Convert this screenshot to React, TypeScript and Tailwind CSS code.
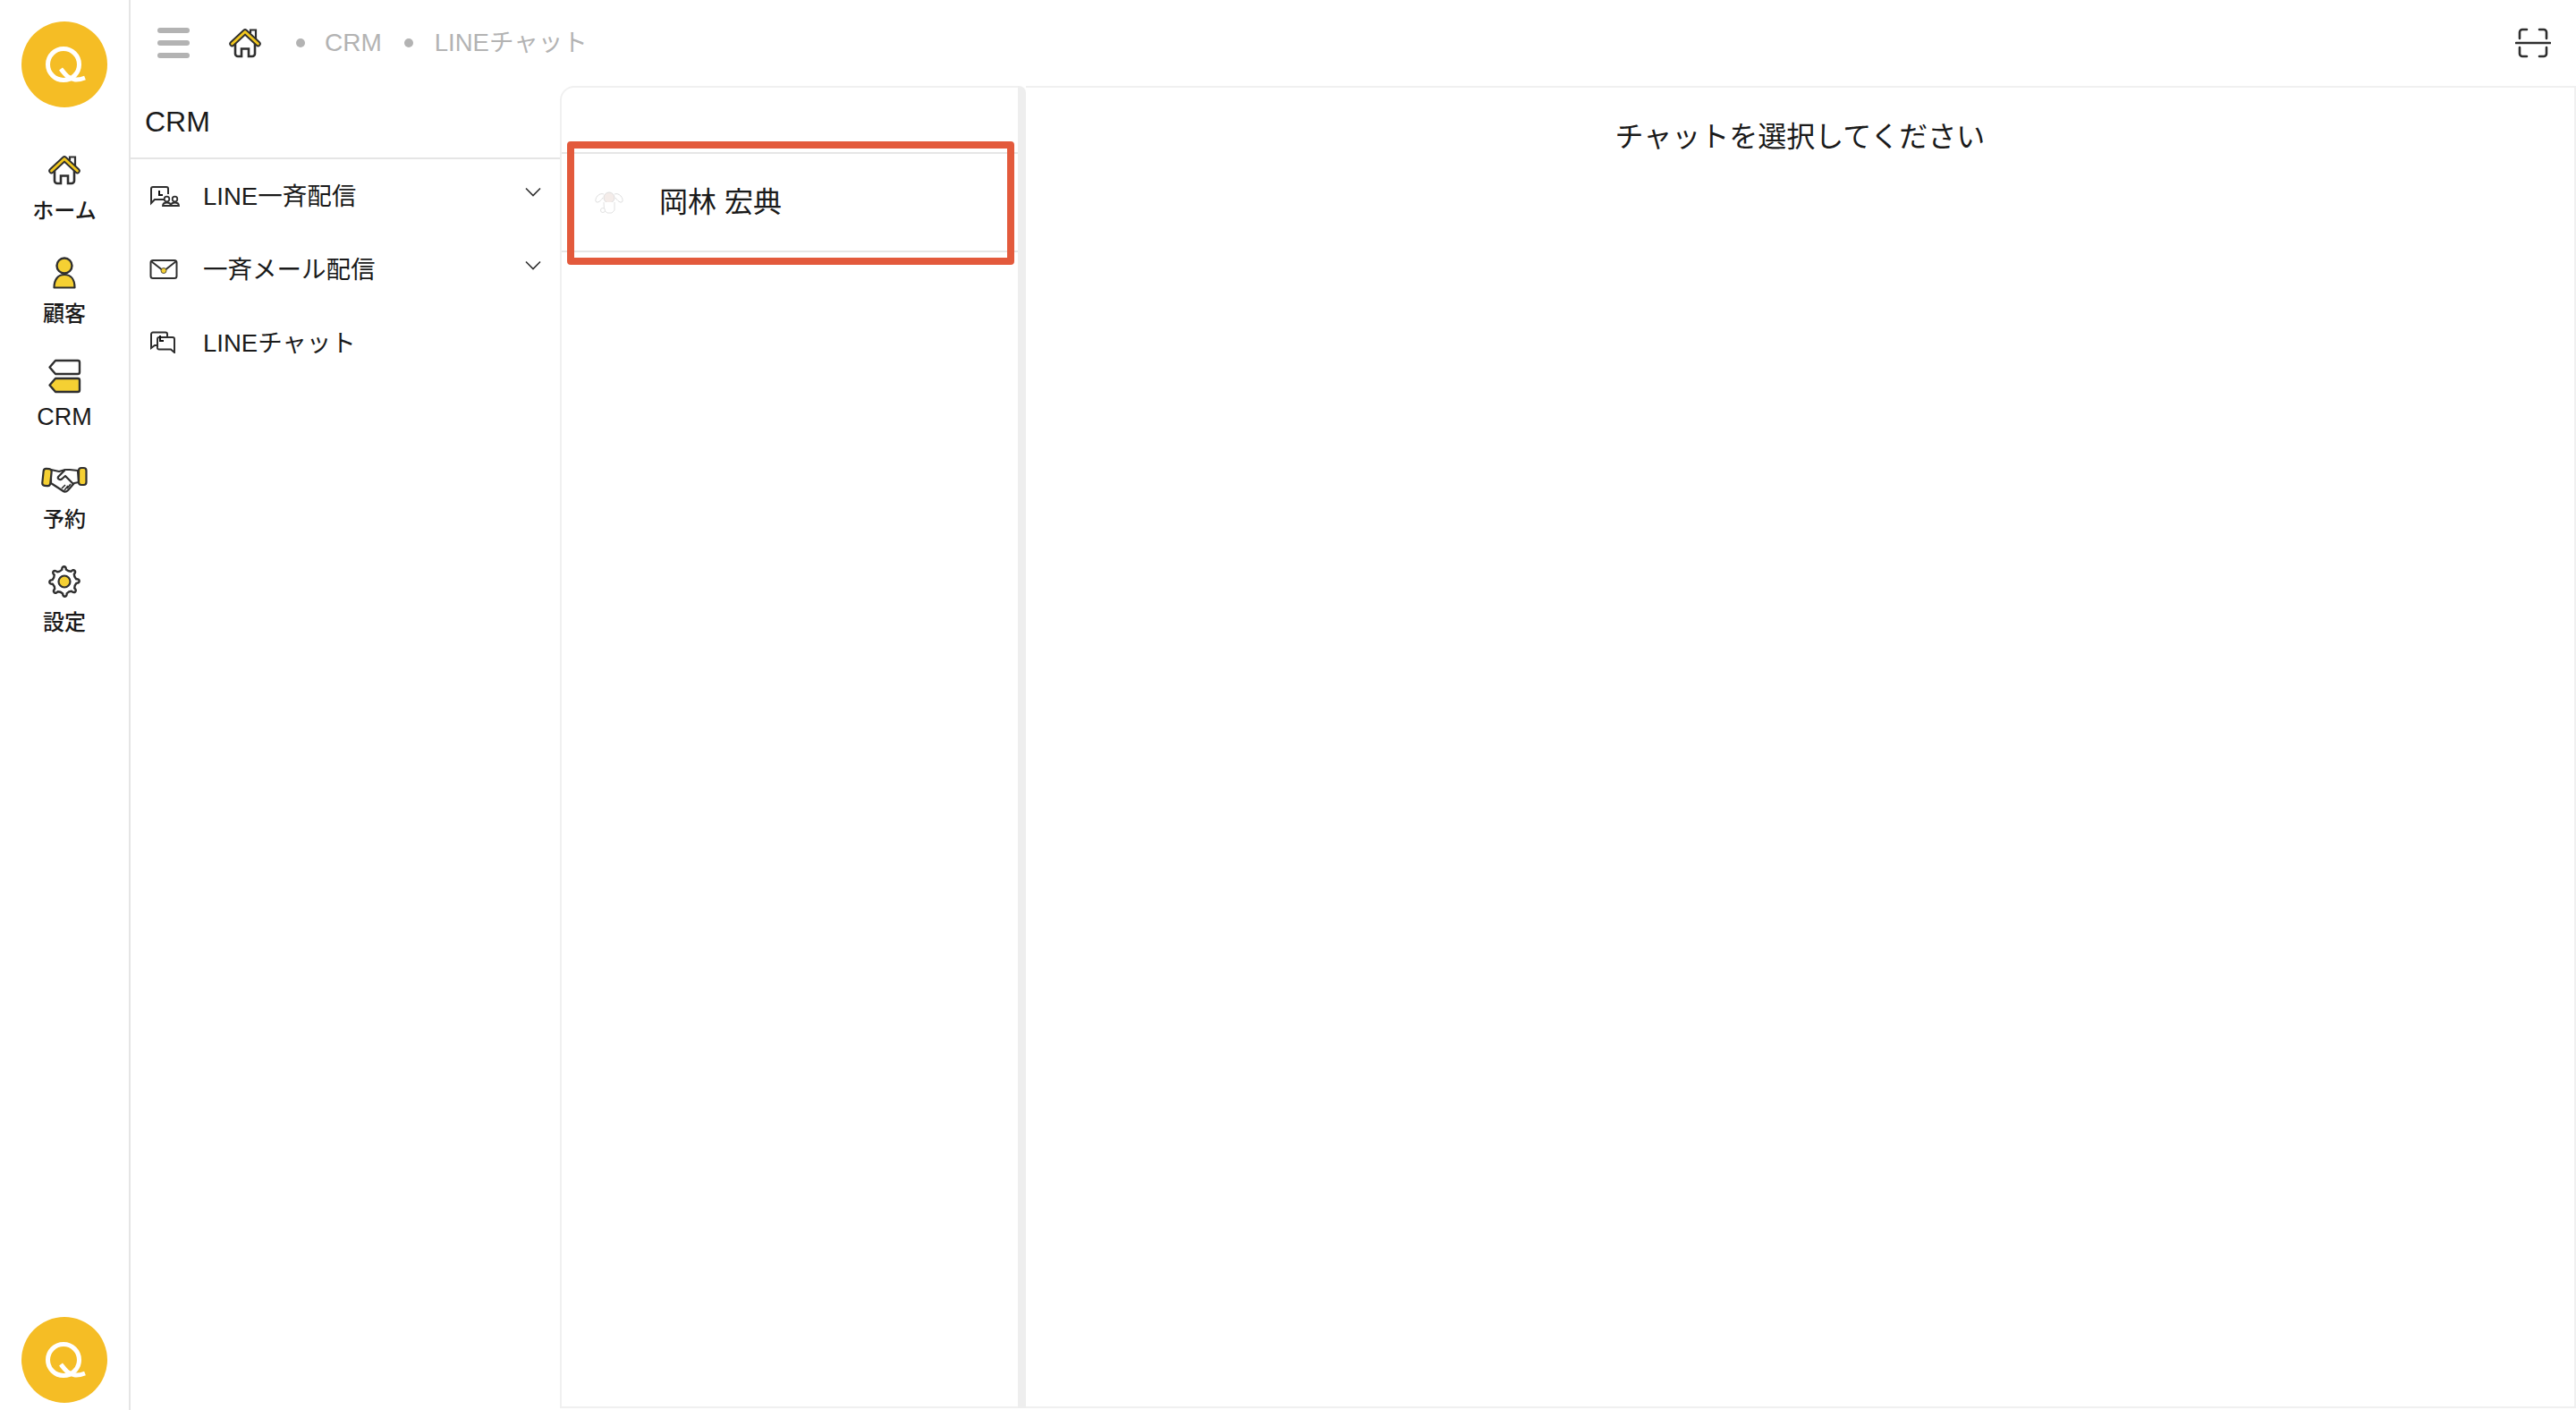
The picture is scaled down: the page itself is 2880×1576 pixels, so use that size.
import { ReactNode } from "react";

const DARK = "#2f2f2f";
const YELLOW = "#f5d033";

function gearPath(cx: number, cy: number) {
    const lobes = 8;
    const outer = 17;
    const inner = 12.5;
    let d = "";
    for (let i = 0; i < lobes; i++) {
        const a0 = (i / lobes) * Math.PI * 2 - 0.2;
        const a1 = ((i + 0.5) / lobes) * Math.PI * 2 - 0.2 - 0.1;
        const a2 = ((i + 1) / lobes) * Math.PI * 2 - 0.2;
        const p = (r: number, a: number) => `${(cx + r * Math.cos(a)).toFixed(2)} ${(cy + r * Math.sin(a)).toFixed(2)}`;
        d += i === 0 ? `M${p(inner + 1, a0)}` : "";
        d += `C${p(outer + 1, a0 + 0.02)} ${p(outer + 1, a1)} ${p(inner + 1, a1 + 0.05)}`;
        d += `Q${p(inner - 0.5, (a1 + a2) / 2 + 0.02)} ${p(inner + 1, a2)}`;
    }
    return d + "Z";
}

function QLogo() {
    return (
        <div className="w-24 h-24 rounded-full bg-[#f5bd25] shrink-0">
            <svg viewBox="0 0 96 96" className="w-24 h-24">
                <circle cx="47" cy="48" r="17.5" fill="none" stroke="#fff" strokeWidth="5" />
                <path d="M44 53 C48 58 52 64 60 65 C64 65.500 67 64.500 71 63" fill="none" stroke="#fff" strokeWidth="5" />
            </svg>
        </div>
    );
}

function HomeIcon({ className }: { className: string }) {
    return (
        <svg viewBox="0 0 36 33" className={className}>
            <path d="M24 5 V1.500 H30 V12" fill="#fff" stroke={DARK} strokeWidth="2.200" />
            <path d="M7 17 V28 a3 3 0 0 0 3 3 h4 V22.500 h8 V31 h4 a3 3 0 0 0 3 -3 V17" fill="none" stroke={DARK} strokeWidth="2.600" />
            <path d="M3.500 17 L18 3.500 L32.500 17" fill="none" stroke={DARK} strokeWidth="6.500" strokeLinecap="round" strokeLinejoin="round" />
            <path d="M3.500 17 L18 3.500 L32.500 17" fill="none" stroke="#f2c81e" strokeWidth="2.800" strokeLinecap="round" strokeLinejoin="round" />
        </svg>
    );
}

function PersonIcon() {
    return (
        <svg viewBox="0 0 26 36" className="w-[26px] h-9">
            <path d="M1.500 34.500 C1.500 25 6 20 13 20 C20 20 24.500 25 24.500 34.500 Z" fill={YELLOW} stroke={DARK} strokeWidth="2.200" strokeLinejoin="round" />
            <circle cx="13" cy="10" r="8.500" fill={YELLOW} stroke={DARK} strokeWidth="2.400" />
        </svg>
    );
}

function CrmIcon() {
    return (
        <svg viewBox="0 0 38 39" className="w-[38px] h-[39px]">
            <path d="M9 2 H34 a2 2 0 0 1 2 2 V15 a2 2 0 0 1 -2 2 H9 L2.500 9.500 Z" fill="#fff" stroke={DARK} strokeWidth="2.400" strokeLinejoin="round" />
            <path d="M9 22 H34 a2 2 0 0 1 2 2 V35 a2 2 0 0 1 -2 2 H9 L2.500 29.500 Z" fill={YELLOW} stroke={DARK} strokeWidth="2.400" strokeLinejoin="round" />
        </svg>
    );
}

function HandshakeIcon() {
    return (
        <svg viewBox="0 0 52 30" className="w-[52px] h-[30px] mt-[2px]">
            <path d="M11 4 L20 6 L27 4 L32 4 L41 5 L42 18 L37 19 L30 27 C28 29 26 29 24 27.500 L11 19 Z" fill="#fff" stroke={DARK} strokeWidth="2.200" strokeLinejoin="round" />
            <path d="M27 4 L19 12 C18 14 21 16 23 14.500 L27 11 L36 20" fill="#fff" stroke={DARK} strokeWidth="2.200" strokeLinejoin="round" />
            <path d="M26 27 L30 22 M29 25 L33 20 M23 25 L27 21" stroke={DARK} strokeWidth="1.600" fill="none" />
            <rect x="2" y="3" width="9" height="19" rx="3" fill={YELLOW} stroke={DARK} strokeWidth="2.200" transform="rotate(6 6.500 12)" />
            <rect x="42" y="2" width="8.500" height="19" rx="3" fill={YELLOW} stroke={DARK} strokeWidth="2.200" />
        </svg>
    );
}

function GearIcon() {
    return (
        <svg viewBox="0 0 38 38" className="w-[38px] h-[38px]">
            <path d={gearPath(19, 19)} fill="#fff" stroke={DARK} strokeWidth="2.400" strokeLinejoin="round" />
            <circle cx="19" cy="19" r="6.500" fill={YELLOW} stroke={DARK} strokeWidth="2.200" />
        </svg>
    );
}

function BroadcastIcon() {
    return (
        <svg viewBox="0 0 34 24" className="w-[34px] h-6 mb-[3px]">
            <path d="M17 16 H6 L2 20 V4 a2 2 0 0 1 2 -2 H19 a2 2 0 0 1 2 2 V10" fill="none" stroke={DARK} strokeWidth="2" />
            <path d="M11 6 V11 H15" fill="none" stroke="#111" strokeWidth="2" />
            <circle cx="19.500" cy="15.500" r="2.800" fill="none" stroke={DARK} strokeWidth="1.800" />
            <circle cx="28.500" cy="15.500" r="2.800" fill="none" stroke={DARK} strokeWidth="1.800" />
            <path d="M15 23 C15 20 17 19.500 19.500 19.500 C22 19.500 24 20 24 23 C24 20 26 19.500 28.500 19.500 C31 19.500 33 20 33 23 Z" fill="none" stroke={DARK} strokeWidth="1.800" />
        </svg>
    );
}

function MailIcon() {
    return (
        <svg viewBox="0 0 32 24" className="w-8 h-6 mb-[2px]">
            <rect x="1.500" y="2" width="29" height="20" rx="2.500" fill="none" stroke={DARK} strokeWidth="2" />
            <path d="M2 3 L16 14 L30 3" fill="none" stroke={DARK} strokeWidth="2" />
            <circle cx="16" cy="13.500" r="3" fill={YELLOW} stroke={DARK} strokeWidth="0.800" />
        </svg>
    );
}

function ChatIcon() {
    return (
        <svg viewBox="0 0 30 25" className="w-[30px] h-[25px] mb-[3px]">
            <path d="M9 16 H6 L2 19 V3.500 a2 2 0 0 1 2 -2 H18 a2 2 0 0 1 2 2 V7" fill="none" stroke={DARK} strokeWidth="2" />
            <path d="M9 18 V9 a2 2 0 0 1 2 -2 H26 a2 2 0 0 1 2 2 V24 L24 20.500 H11 a2 2 0 0 1 -2 -2.500" fill="#fff" stroke={DARK} strokeWidth="2" />
            <path d="M12 5 V11 H16" fill="none" stroke="#111" strokeWidth="2" />
        </svg>
    );
}

function Chevron() {
    return (
        <svg viewBox="0 0 18 11" className="w-[18px] h-[11px] mb-[11px]">
            <path d="M1 1.500 L9 9.500 L17 1.500" fill="none" stroke={DARK} strokeWidth="1.600" />
        </svg>
    );
}

function Bunny() {
    return (
        <svg viewBox="0 0 32 26" className="w-8 h-[26px]">
            <path d="M10 4 C5 2 0 8 1 12 C3 15 7 11 9 8 M22 4 C27 2 32 8 31 12 C29 15 25 11 23 8" fill="#fff" stroke="#dedede" strokeWidth="1" />
            <circle cx="16" cy="8" r="6" fill="#f4ece9" stroke="#dedede" strokeWidth="1" />
            <path d="M10 13 L10.500 22 L14 25 L19 25 L22 22 L22 13" fill="#fff" stroke="#e2e2e2" strokeWidth="1" />
            <circle cx="9" cy="22" r="2.500" fill="#fff" stroke="#e2e2e2" strokeWidth="1" />
        </svg>
    );
}

function NavItem({ icon, label, labelClass }: { icon: ReactNode; label: string; labelClass?: string }) {
    return (
        <div className="h-[115px] flex flex-col items-center">
            <div className="h-10 flex items-center justify-center">{icon}</div>
            <span className={`mt-[8px] h-9 leading-9 text-[#1a1a1a] font-medium ${labelClass ?? "text-2xl"}`}>{label}</span>
        </div>
    );
}

function MenuRow({ icon, label, hasChevron }: { icon: ReactNode; label: string; hasChevron?: boolean }) {
    return (
        <div className="h-[82px] flex items-center pl-[21px] pr-[21px]">
            <div className="w-[60px] shrink-0 flex items-center">{icon}</div>
            <span className="text-[27.5px] text-[#1a1a1a] flex-1">{label}</span>
            {hasChevron && <Chevron />}
        </div>
    );
}

export default function App() {
    return (
        <div className="w-full h-[1576px] flex bg-white overflow-hidden font-['Liberation_Sans','Noto_Sans_CJK_JP',sans-serif]">
            <aside className="w-[146px] shrink-0 border-r-2 border-[#e5e5e5] flex flex-col items-center justify-between pt-6 pb-2">
                <div className="flex flex-col items-center">
                    <QLogo />
                    <nav className="mt-[50px] w-full">
                        <NavItem icon={<HomeIcon className="w-9 h-[33px]" />} label="ホーム" />
                        <NavItem icon={<PersonIcon />} label="顧客" />
                        <NavItem icon={<CrmIcon />} label="CRM" labelClass="text-[27px]" />
                        <NavItem icon={<HandshakeIcon />} label="予約" />
                        <NavItem icon={<GearIcon />} label="設定" />
                    </nav>
                </div>
                <QLogo />
            </aside>

            <div className="flex-1 flex flex-col min-w-0">
                <header className="h-[96px] shrink-0 flex items-center pl-[30px] pr-[28px]">
                    <div className="w-9 flex flex-col gap-[8px]">
                        <span className="h-[6px] rounded-full bg-[#b3b3b3]" />
                        <span className="h-[6px] rounded-full bg-[#b3b3b3]" />
                        <span className="h-[6px] rounded-full bg-[#b3b3b3]" />
                    </div>
                    <HomeIcon className="w-9 h-[33px] ml-[44px]" />
                    <span className="w-[10px] h-[10px] rounded-full bg-[#b3b3b3] ml-[39px]" />
                    <span className="text-[28px] text-[#b3b3b3] ml-[22px]">CRM</span>
                    <span className="w-[10px] h-[10px] rounded-full bg-[#b3b3b3] ml-[25px]" />
                    <span className="text-[27.5px] text-[#b3b3b3] ml-[24px]">LINEチャット</span>
                    <svg viewBox="0 0 40 34" className="w-10 h-[34px] ml-auto">
                        <path d="M5 12 V5 a3 3 0 0 1 3 -3 H13 M27 2 H32 a3 3 0 0 1 3 3 V12 M5 22 V29 a3 3 0 0 0 3 3 H13 M27 32 H32 a3 3 0 0 0 3 -3 V22" fill="none" stroke={DARK} strokeWidth="2.600" strokeLinecap="round" />
                        <path d="M1 17 H39" stroke={DARK} strokeWidth="2.600" strokeLinecap="round" />
                    </svg>
                </header>

                <div className="flex-1 flex min-h-0">
                    <div className="w-[480px] shrink-0">
                        <h2 className="h-[82px] pl-[16px] pr-4 flex items-center text-[32px] text-[#1a1a1a] border-b-2 border-[#e5e5e5]">CRM</h2>
                        <div className="pt-[1px]">
                            <MenuRow icon={<BroadcastIcon />} label="LINE一斉配信" hasChevron />
                            <MenuRow icon={<MailIcon />} label="一斉メール配信" hasChevron />
                            <MenuRow icon={<ChatIcon />} label="LINEチャット" />
                        </div>
                    </div>

                    <div className="relative w-[521px] shrink-0 flex mb-[2px]">
                        <div className="flex-1 border-2 border-r-0 border-[#f0f0f0] rounded-tl-[16px] pt-[72px]">
                            <div className="h-[112px] flex items-center pl-[37px] border-y-2 border-[#e6e6e6]">
                                <Bunny />
                                <span className="ml-[40px] text-[32px] text-[#1a1a1a]">岡林 宏典</span>
                            </div>
                        </div>
                        <div className="w-[9px] bg-[#eeeeee] rounded-tr-[8px]" />
                        {/* annotation box */}
                        <div className="absolute left-[8px] top-[62px] w-[500px] h-[138px] border-[8px] border-[#e35a3c] rounded-[4px]" />
                    </div>

                    <main className="flex-1 min-w-0 border-2 border-l-0 border-[#f0f0f0] mb-[2px] pt-[32px] text-center">
                        <p className="text-[32px] leading-[46px] text-[#1a1a1a]">チャットを選択してください</p>
                    </main>
                </div>
            </div>
        </div>
    );
}
